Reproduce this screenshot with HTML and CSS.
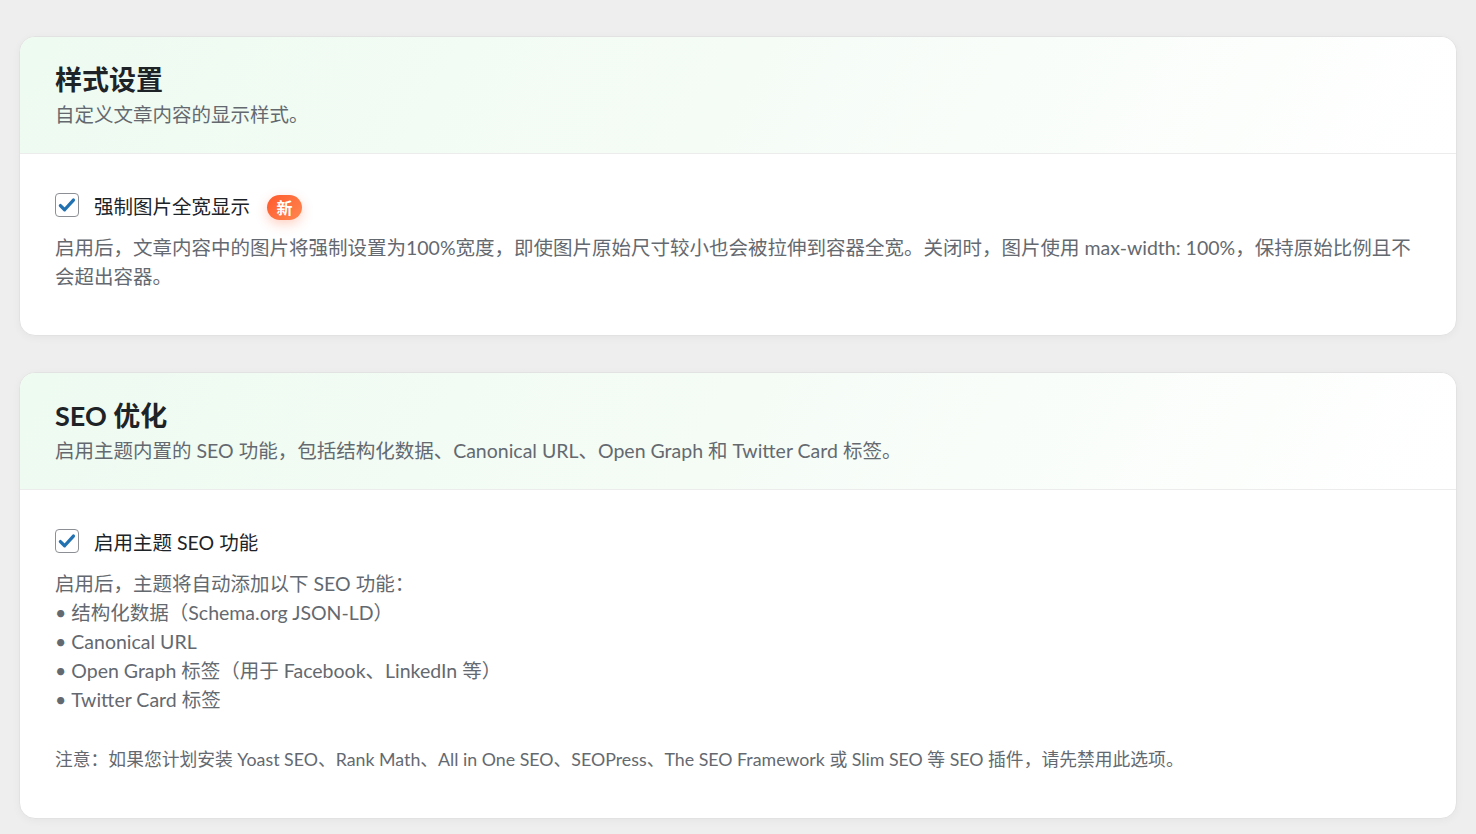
FILE: index.html
```html
<!DOCTYPE html>
<html lang="zh-CN">
<head>
    <meta charset="UTF-8">
    <meta name="viewport" content="width=device-width, initial-scale=1.0">
    <title>主题设置</title>
    <link rel="stylesheet" href="styles.css">
</head>
<body>
    <div class="page">
        <div class="card">
            <div class="card-header">
                <h2>样式设置</h2>
                <p class="card-desc">自定义文章内容的显示样式。</p>
            </div>
            <div class="card-body">
                <label class="check-row">
                    <span class="checkbox">
                        <svg viewBox="0 0 24 24" width="24" height="24"><path d="M4.8 12.6l4.6 4.6 9.6-10.6" fill="none" stroke="#2271b1" stroke-width="3.6" stroke-linecap="round" stroke-linejoin="round"/></svg>
                    </span>
                    <span class="check-label">强制图片全宽显示</span>
                    <span class="badge-new">新</span>
                </label>
                <p class="help">启用后，文章内容中的图片将强制设置为100%宽度，即使图片原始尺寸较小也会被拉伸到容器全宽。关闭时，图片使用 max-width: 100%，保持原始比例且不会超出容器。</p>
            </div>
        </div>

        <div class="card">
            <div class="card-header">
                <h2>SEO 优化</h2>
                <p class="card-desc">启用主题内置的 SEO 功能，包括结构化数据、Canonical URL、Open Graph 和 Twitter Card 标签。</p>
            </div>
            <div class="card-body">
                <label class="check-row">
                    <span class="checkbox">
                        <svg viewBox="0 0 24 24" width="24" height="24"><path d="M4.8 12.6l4.6 4.6 9.6-10.6" fill="none" stroke="#2271b1" stroke-width="3.6" stroke-linecap="round" stroke-linejoin="round"/></svg>
                    </span>
                    <span class="check-label">启用主题 SEO 功能</span>
                </label>
                <p class="help">启用后，主题将自动添加以下 SEO 功能：<br>
                    • 结构化数据（Schema.org JSON-LD）<br>
                    • Canonical URL<br>
                    • Open Graph 标签（用于 Facebook、LinkedIn 等）<br>
                    • Twitter Card 标签</p>
                <p class="help note">注意：如果您计划安装 Yoast SEO、Rank Math、All in One SEO、SEOPress、The SEO Framework 或 Slim SEO 等 SEO 插件，请先禁用此选项。</p>
            </div>
        </div>
    </div>
</body>
</html>
```

FILE: styles.css
```css
body {
    font-family: Lato, "Noto Sans CJK SC", sans-serif;
    color: #1d2327;
    background-color: #eeeeee;
    margin: 0;
    padding: 0;
}
.page {
    padding: 36px 19px 16px;
}
.card {
    background-color: #ffffff;
    border: 1px solid #e2e2e2;
    border-radius: 16px;
    box-shadow: 0 2px 8px rgba(0, 0, 0, 0.04);
    margin-bottom: 36px;
    overflow: hidden;
}
.card-header {
    background: linear-gradient(120deg, #eefbf1 0%, #f5fcf6 50%, #ffffff 100%);
    border-bottom: 1px solid #ececec;
    padding: 25px 35px 24px;
}
.card-header h2 {
    margin: 0;
    font-size: 27px;
    line-height: 36px;
    font-weight: 700;
    color: #1d2327;
}
.card-desc {
    margin: 3px 0 0;
    font-size: 19.5px;
    line-height: 28px;
    color: #646970;
}
.card-body {
    padding: 36px 35px 44px;
}
.check-row {
    display: flex;
    align-items: center;
    height: 30px;
}
.checkbox {
    width: 22px;
    height: 22px;
    border: 1px solid #8c8f94;
    border-radius: 4px;
    background-color: #ffffff;
    display: flex;
    align-items: center;
    justify-content: center;
    box-sizing: content-box;
}
.checkbox svg {
    width: 22px;
    height: 22px;
}
.check-label {
    margin-left: 15px;
    font-size: 19.5px;
    color: #1d2327;
}
.badge-new {
    margin-left: 17px;
    width: 35px;
    height: 25px;
    border-radius: 13px;
    background: linear-gradient(135deg, #ff5a2c 0%, #ff8750 100%);
    box-shadow: 0 4px 12px rgba(255, 100, 50, 0.3);
    color: #ffffff;
    font-size: 16px;
    font-weight: 700;
    display: flex;
    align-items: center;
    justify-content: center;
    margin-top: 4px;
}
.help {
    margin: 13px 0 0;
    font-size: 19.5px;
    line-height: 29px;
    color: #646970;
}
.note {
    margin-top: 31px;
    font-size: 17.8px;
}
```
